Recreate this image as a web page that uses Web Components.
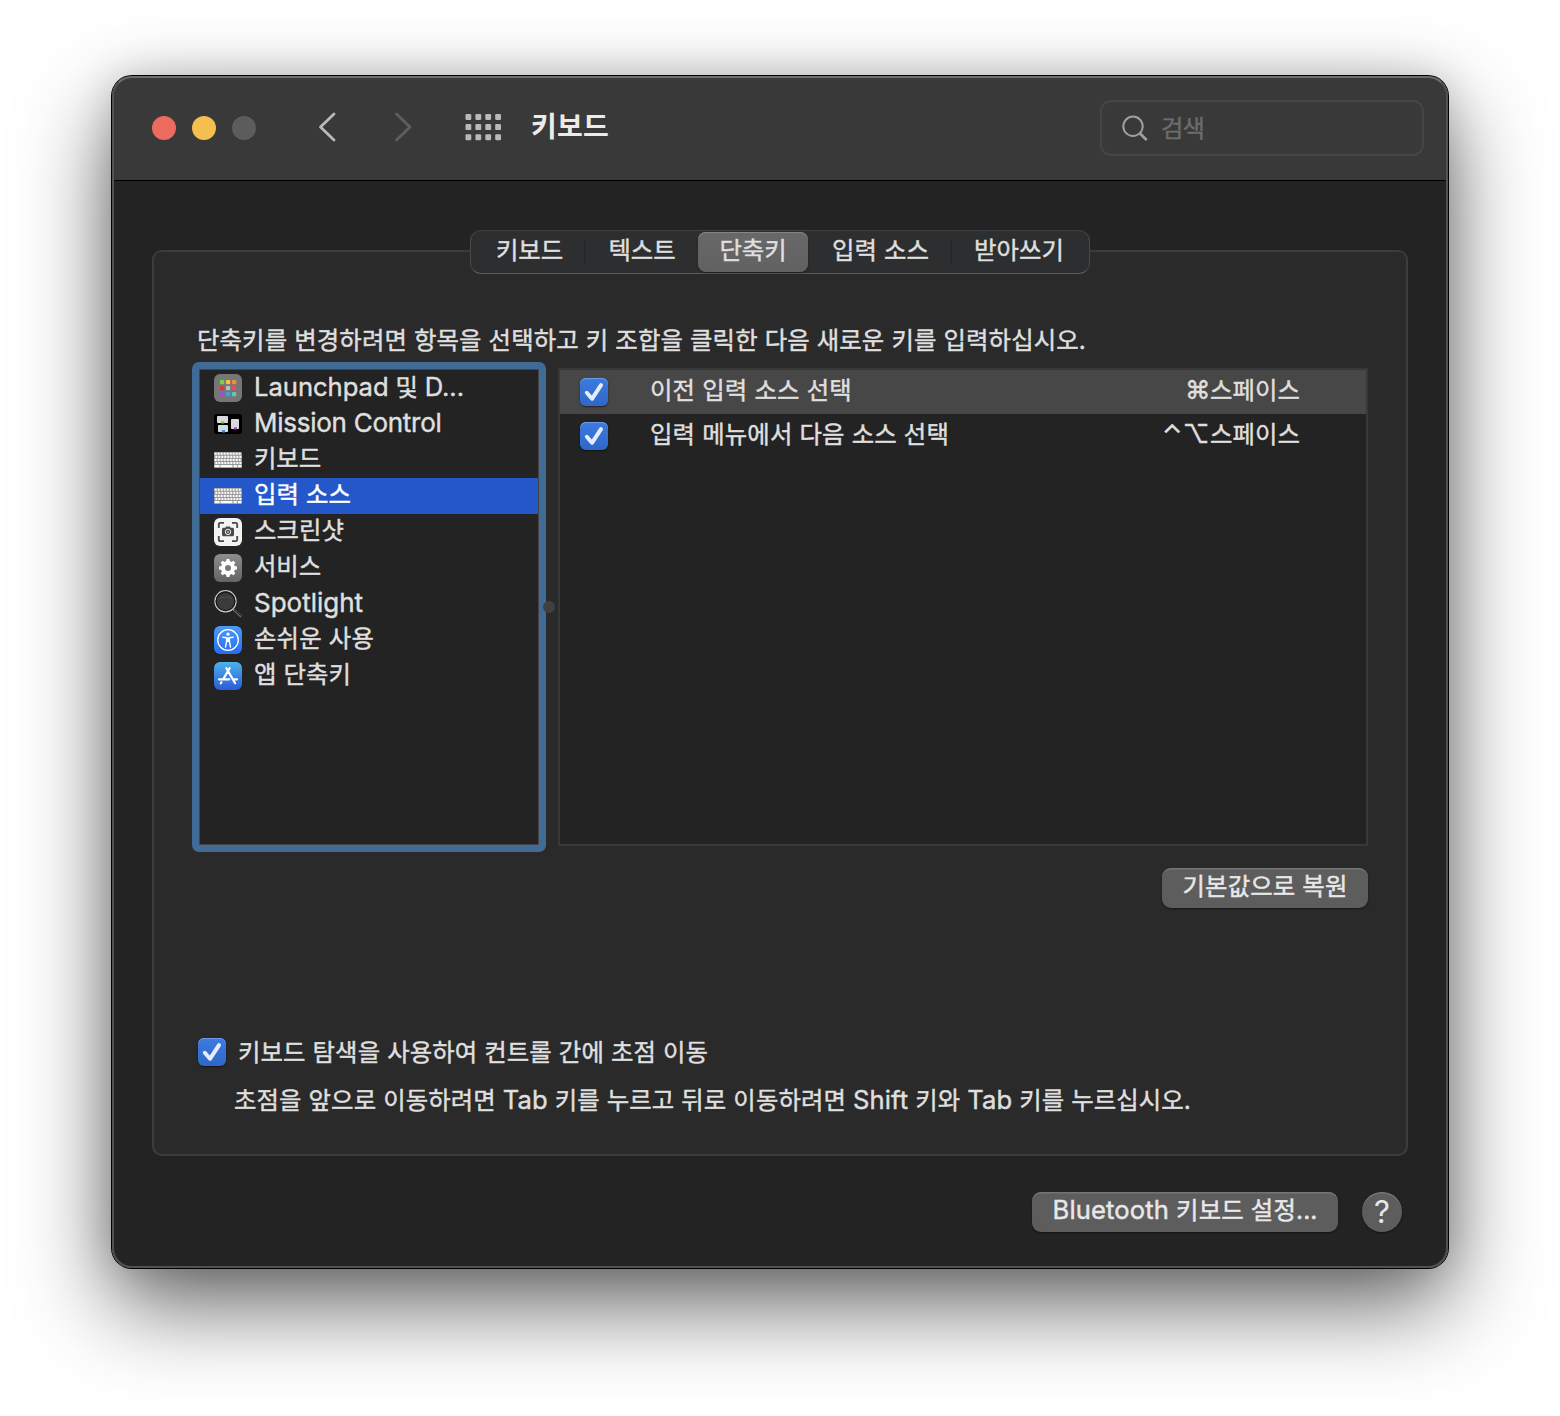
<!DOCTYPE html>
<html lang="ko">
<head>
<meta charset="utf-8">
<title>키보드</title>
<style>
html,body{margin:0;height:100%;background:#fff}
body{font-family:Inter,"Noto Sans CJK KR",sans-serif;color:#dfdfdf;overflow:hidden}
</style>
</head>
<body>
<pref-window></pref-window>
<script>
const make=(name,html,after)=>customElements.define(name,class extends HTMLElement{
  connectedCallback(){
    if(this.shadowRoot)return;
    const t=document.createElement('template');
    t.innerHTML=typeof html==='function'?html(this):html;
    this.attachShadow({mode:'open'}).append(t.content.cloneNode(true));
    if(after)after(this);
  }
});

/* Single line of text whose tracking is set so that it spans the width in "w". */
make('mac-text',`<style>
:host{display:block;white-space:nowrap;font-size:24.4px;line-height:36px;flex:none;-webkit-text-stroke:.45px currentColor}
span{display:inline-block;white-space:pre}
::slotted(span){font-size:25.6px;line-height:1}
</style><span><slot></slot></span>`,el=>{
  const s=el.shadowRoot.querySelector('span'),w=+el.getAttribute('w');
  if(el.hasAttribute('size'))el.style.fontSize=el.getAttribute('size')+'px';
  if(w){
    const n=[...el.textContent].length;
    s.style.letterSpacing=(w-s.getBoundingClientRect().width)/n+'px';
  }
});

make('mac-check',`<style>
:host{display:block;width:28px;height:28px;flex:none;border-radius:6px;background:linear-gradient(#3d7be0,#2f67c6);box-shadow:inset 0 1px 0 #6d9ce8,0 1px 2px #0008}
svg{display:block}
</style><svg width="28" height="28" viewBox="0 0 28 28"><path d="M6.8 14.8 12 20.8 21 7.2" fill="none" stroke="#e4edfb" stroke-width="4" stroke-linecap="round" stroke-linejoin="round"/></svg>`);

make('mac-button',`<style>
:host{display:flex;box-sizing:border-box;height:40px;justify-content:center;align-items:flex-start;border-radius:9px;background:#5d5d5d;color:#e8e8e8;box-shadow:inset 0 2px 0 -.5px #757575,0 1px 2px #0007;flex:none}
:host([round]){width:40px;border-radius:50%}
</style><slot></slot>`);

const keyboard=()=>{
  let s='<rect x="0" y="6" width="28" height="16" rx="1" fill="#8f8f8f"/>';
  for(let r=0;r<4;r++)for(let c=0;c<9;c++)s+=`<rect x="${.6+c*3+(r%2?.7:0)}" y="${6.6+r*3.1}" width="2.1" height="2.2" fill="#fbfbfb"/>`;
  return s+'<path d="M.6 19h5v2.300h-5zM6.500 19h12v2.300h-12zM19.500 19h3.400v2.300h-3.400zM23.800 19h3.600v2.300h-3.600z" fill="#fbfbfb"/>';
};
const launch=()=>{
  const c=['#72d64b','#f4c63c','#ee9133','#dc3b30','#b9bec2','#ee4a5c','#a050d8','#39a0f0','#56cbb5'];
  return '<rect width="28" height="28" rx="6" fill="#767676"/>'+c.map((f,i)=>`<rect x="${6+i%3*6}" y="${6+(i/3|0)*6}" width="4.2" height="4.2" rx=".8" fill="${f}"/>`).join('');
};
const gear=()=>{
  let s='<defs><linearGradient id="g" x2="0" y2="1"><stop stop-color="#8d8d8d"/><stop offset="1" stop-color="#646464"/></linearGradient></defs><rect width="28" height="28" rx="6" fill="url(#g)"/><g fill="#fff">';
  for(let i=0;i<8;i++)s+=`<path d="M11.9 8.5 12.6 5h2.8l.7 3.5z" transform="rotate(${i*45} 14 14)"/>`;
  return s+'</g><circle cx="14" cy="14" r="5" fill="none" stroke="#fff" stroke-width="4"/>';
};
const icons={
  launch,keyboard,gear,
  mission:()=>`<rect y="4" width="28" height="20" rx="3" fill="#000"/><g fill="#dadada"><rect x="3" y="6" width="11" height="7" rx=".8"/><rect x="4" y="15" width="10" height="7" rx=".8"/><rect x="17" y="9" width="8" height="10" rx=".8"/></g><path d="M7.200 11.300h3v2.200h-3z" fill="#64d83c"/><path d="M8 20h3v2.500H8z" fill="#2f9bf0"/><path d="M20 17.300h3v2.200h-3z" fill="#9b4bd6"/>`,
  shot:()=>`<rect width="28" height="28" rx="6" fill="#f3f3f3"/><path d="M4.800 10V6.300q0-1.500 1.500-1.500H10M18 4.800h3.700q1.500 0 1.500 1.500V10M23.200 18v3.700q0 1.500-1.500 1.500H18M10 23.200H6.300q-1.500 0-1.500-1.500V18" fill="none" stroke="#4a4a4a" stroke-width="1.800"/><path d="M9.500 9.800h1.800l1-1.200h3.400l1 1.200h1.800q1.500 0 1.500 1.500v5.400q0 1.500-1.500 1.500h-9q-1.500 0-1.500-1.500v-5.400q0-1.500 1.500-1.500z" fill="#4a4a4a"/><circle cx="14" cy="13.900" r="2.700" fill="#4a4a4a" stroke="#f3f3f3" stroke-width="1"/><circle cx="14" cy="13.900" r="1" fill="#bbb"/>`,
  spot:()=>`<path d="M19 19 27.300 26.600" stroke="#777" stroke-width="2.200"/><path d="M20 19.700 27.300 26.300" stroke="#151515" stroke-width="1"/><circle cx="11.500" cy="11.300" r="10.600" fill="#393b3d" stroke="#c9c9c9" stroke-width="1.200"/><circle cx="11.500" cy="11.300" r="9.300" fill="none" stroke="#17191b" stroke-width="1.300"/><path d="M4.500 9q7-4 14 0" stroke="#4d5054" fill="none"/>`,
  access:()=>`<defs><linearGradient id="a" x2="0" y2="1"><stop stop-color="#4a9bf8"/><stop offset="1" stop-color="#2a6cf2"/></linearGradient></defs><rect width="28" height="28" rx="6" fill="url(#a)"/><circle cx="14" cy="14" r="10.300" fill="none" stroke="#fff" stroke-width="1.300"/><circle cx="14" cy="8.200" r="1.600" fill="#fff"/><path d="M8.800 11.200 12.600 11.800v3.700L11.500 21M19.200 11.200 15.400 11.800v3.700L16.500 21" fill="none" stroke="#fff" stroke-width="1.400" stroke-linecap="round" stroke-linejoin="round"/><path d="M12 11.400h4V16h-4z" fill="#fff"/>`,
  store:()=>`<defs><linearGradient id="s" x2="0" y2="1"><stop stop-color="#4db2ea"/><stop offset="1" stop-color="#2a5cd6"/></linearGradient></defs><rect width="28" height="28" rx="6" fill="url(#s)"/><g stroke="#fff" stroke-width="2.200" stroke-linecap="round" fill="none"><path d="M15.600 6.200 9.600 16.500M7.400 20.300l-.6 1M12.400 6.200l8.700 15M5 17.300h10.300M19.500 17.300H23"/></g>`
};
make('app-icon',el=>`<style>:host{display:block;width:28px;height:28px;flex:none}svg{display:block;overflow:visible}</style><svg width="28" height="28" viewBox="0 0 28 28">${icons[el.getAttribute('name')]()}</svg>`);

make('side-row',el=>`<style>
:host{display:flex;height:36px;padding-left:14px;gap:12px;flex:none}
:host([selected]){background:#2457c9;color:#fff}
app-icon{margin-top:4px}
slot{display:block;margin-top:-2px}
:host([latin]) slot{margin-top:-1px}
</style><app-icon name="${el.getAttribute('icon')}"></app-icon><slot></slot>`);

make('side-list',`<style>
:host{display:flex;flex-direction:column;box-sizing:border-box;width:354px;height:490px;border:7px solid #406b96;border-radius:7px;background:#406b96;flex:none}
div{flex:1;border:1px solid #454545;background:#232323;display:flex;flex-direction:column}
</style><div><slot></slot></div>`);

make('split-grip',`<style>:host{display:block;width:12px;flex:none}i{display:block;width:12px;height:12px;border-radius:50%;background:#404041;margin:239px 0 0 -3px}</style><i></i>`);

make('key-row',`<style>
:host{display:flex;height:44px;padding:0 66px 0 20px;flex:none}
:host([selected]){background:#474747}
mac-check{margin:8px 42px 0 0}
.k{margin-left:auto;display:flex}
.k,.n{padding-top:2px}
</style><mac-check></mac-check><div class="n"><slot></slot></div><div class="k"><slot name="keys"></slot></div>`);

make('key-table',`<style>:host{display:flex;flex-direction:column;box-sizing:border-box;width:810px;height:478px;margin-top:6px;border:2px solid #383838;background:#232323;flex:none}</style><slot></slot>`);

make('tab-item',`<style>
:host{display:flex;justify-content:center;box-sizing:border-box;height:40px;flex:none;border-radius:8px}
:host([selected]){background:linear-gradient(#686868,#616161);box-shadow:inset 0 1px 0 #858585,0 1px 2px #0006}
</style><slot></slot>`);
make('tab-rule',`<style>:host{display:block;width:2px;height:24px;margin-top:8px;background:#272829;flex:none}</style>`);
make('tab-bar',`<style>
:host{display:flex;box-sizing:border-box;width:620px;height:44px;border:1px solid #464748;border-color:#3e3f40 #464748 #5a5b5c;border-radius:11px;background:#2d2e2f;padding-top:1px;flex:none}
</style><slot></slot>`);

make('search-field',`<style>
:host{display:flex;box-sizing:border-box;width:324px;height:56px;border:2px solid #454545;border-radius:11px;padding-left:19px;color:#6c6c6c;flex:none}
svg{margin:11px 12px 0 0}
</style><svg width="28" height="30" viewBox="0 0 28 30" fill="none" stroke="#a0a0a0"><circle cx="12" cy="13.300" r="9.700" stroke-width="2"/><path d="M19 20.500 25.700 27" stroke-width="2.800"/></svg><slot></slot>`);

make('title-bar',()=>{
  let g='';
  for(let r=0;r<3;r++)for(let c=0;c<4;c++)g+=`<rect x="${.5+c*9.9}" y="${r*10.1}" width="5.800" height="6" rx="1.200"/>`;
  return `<style>
:host{display:flex;box-sizing:border-box;height:105px;background:#393939;border-bottom:1px solid #000;padding:0 24px 0 40px;align-items:flex-start;flex:none}
.l{display:flex;gap:16px;margin-top:40px}
.l i{width:24px;height:24px;border-radius:50%}
svg{display:block;flex:none}
mac-text{color:#ebebeb;font-weight:700;-webkit-text-stroke:0}
search-field mac-text{color:#6c6c6c;font-weight:400;-webkit-text-stroke:.4px}
</style>
<div class="l"><i style="background:#ed6a5e"></i><i style="background:#f5bf4f"></i><i style="background:#5c5c5c"></i></div>
<svg style="margin:36px 0 0 62px" width="20" height="30" fill="none" stroke="#b9b9b9" stroke-width="2.800" stroke-linecap="round" stroke-linejoin="round"><path d="M16 2 2.500 15l13.500 13"/></svg>
<svg style="margin:36px 0 0 56px" width="20" height="30" fill="none" stroke="#5f5f5f" stroke-width="2.800" stroke-linecap="round" stroke-linejoin="round"><path d="M2.500 2 16 15l-13.500 13"/></svg>
<svg style="margin:38px 0 0 51px" width="38" height="27" fill="#b9b9b9">${g}</svg>
<mac-text w="78" size="28" style="margin:33px auto 0 28px">키보드</mac-text>
<search-field style="margin-top:24px"><mac-text w="43" style="margin-top:8px">검색</mac-text></search-field>`;
});

make('pref-window',`<style>
:host{display:flex;justify-content:center;padding-top:76px}
.win{position:relative;box-sizing:border-box;width:1336px;height:1192px;border-radius:20px;background:#232323;overflow:hidden;display:flex;flex-direction:column}
.shade{border-radius:20px;box-shadow:0 0 0 1px #000,0 36px 90px rgba(0,0,0,.62),0 0 40px rgba(0,0,0,.15)}
.edge{position:absolute;inset:0;border-radius:20px;border:2px solid #525252;border-top-color:#6e6e6e;pointer-events:none}
.panel{box-sizing:border-box;width:1256px;height:906px;margin:69px 0 0 40px;border:2px solid #3b3c3c;border-radius:10px;background:#2a2a2b;display:flex;flex-direction:column;padding:0 38px;flex:none}
tab-bar{margin:-22px auto 0}
.split{display:flex}
.check{display:flex;margin:130px 0 0 6px;gap:12px}
.foot{display:flex;justify-content:flex-end;gap:24px;padding:36px 46px 0 0}
</style>
<div class="shade"><div class="win">
<title-bar></title-bar>
<div class="panel">
  <tab-bar>
    <tab-item style="width:113px;padding-left:4px"><mac-text w="67">키보드</mac-text></tab-item><tab-rule></tab-rule>
    <tab-item style="width:112px"><mac-text w="67">텍스트</mac-text></tab-item>
    <tab-item selected style="width:110px"><mac-text w="67">단축키</mac-text></tab-item>
    <tab-item style="width:142px;padding-left:3px"><mac-text w="97">입력 소스</mac-text></tab-item><tab-rule></tab-rule>
    <tab-item style="width:134px"><mac-text w="90">받아쓰기</mac-text></tab-item>
  </tab-bar>
  <mac-text w="889" style="margin:48px 0 4px 5px">단축키를 변경하려면 항목을 선택하고 키 조합을 클릭한 다음 새로운 키를 입력하십시오.</mac-text>
  <div class="split">
    <side-list>
      <side-row icon="launch" latin><mac-text w="210"><span>Launchpad</span> 및 <span>D...</span></mac-text></side-row>
      <side-row icon="mission" latin><mac-text w="187.500" size="26">Mission Control</mac-text></side-row>
      <side-row icon="keyboard"><mac-text w="67">키보드</mac-text></side-row>
      <side-row icon="keyboard" selected><mac-text w="97">입력 소스</mac-text></side-row>
      <side-row icon="shot"><mac-text w="90">스크린샷</mac-text></side-row>
      <side-row icon="gear"><mac-text w="67">서비스</mac-text></side-row>
      <side-row icon="spot" latin><mac-text w="109" size="26">Spotlight</mac-text></side-row>
      <side-row icon="access"><mac-text w="120">손쉬운 사용</mac-text></side-row>
      <side-row icon="store"><mac-text w="97">앱 단축키</mac-text></side-row>
    </side-list>
    <split-grip></split-grip>
    <key-table>
      <key-row selected><mac-text w="202">이전 입력 소스 선택</mac-text><mac-text slot="keys" w="25" size="25.500">⌘</mac-text><mac-text slot="keys" w="90">스페이스</mac-text></key-row>
      <key-row><mac-text w="299">입력 메뉴에서 다음 소스 선택</mac-text><mac-text slot="keys" w="48" size="26">⌃⌥</mac-text><mac-text slot="keys" w="90">스페이스</mac-text></key-row>
    </key-table>
  </div>
  <mac-button style="width:206px;align-self:flex-end;margin-top:16px"><mac-text w="165">기본값으로 복원</mac-text></mac-button>
  <div class="check"><mac-check></mac-check><mac-text w="470" style="margin-top:-4px">키보드 탐색을 사용하여 컨트롤 간에 초점 이동</mac-text></div>
  <mac-text w="957" style="margin:12px 0 0 42px">초점을 앞으로 이동하려면 <span>Tab</span> 키를 누르고 뒤로 이동하려면 <span>Shift</span> 키와 <span>Tab</span> 키를 누르십시오.</mac-text>
</div>
<div class="foot">
  <mac-button style="width:306px"><mac-text w="265"><span>Bluetooth</span> 키보드 설정...</mac-text></mac-button>
  <mac-button round><mac-text size="31" style="line-height:40px;-webkit-text-stroke:0">?</mac-text></mac-button>
</div>
<div class="edge"></div>
</div></div>`);
</script>
</body>
</html>
